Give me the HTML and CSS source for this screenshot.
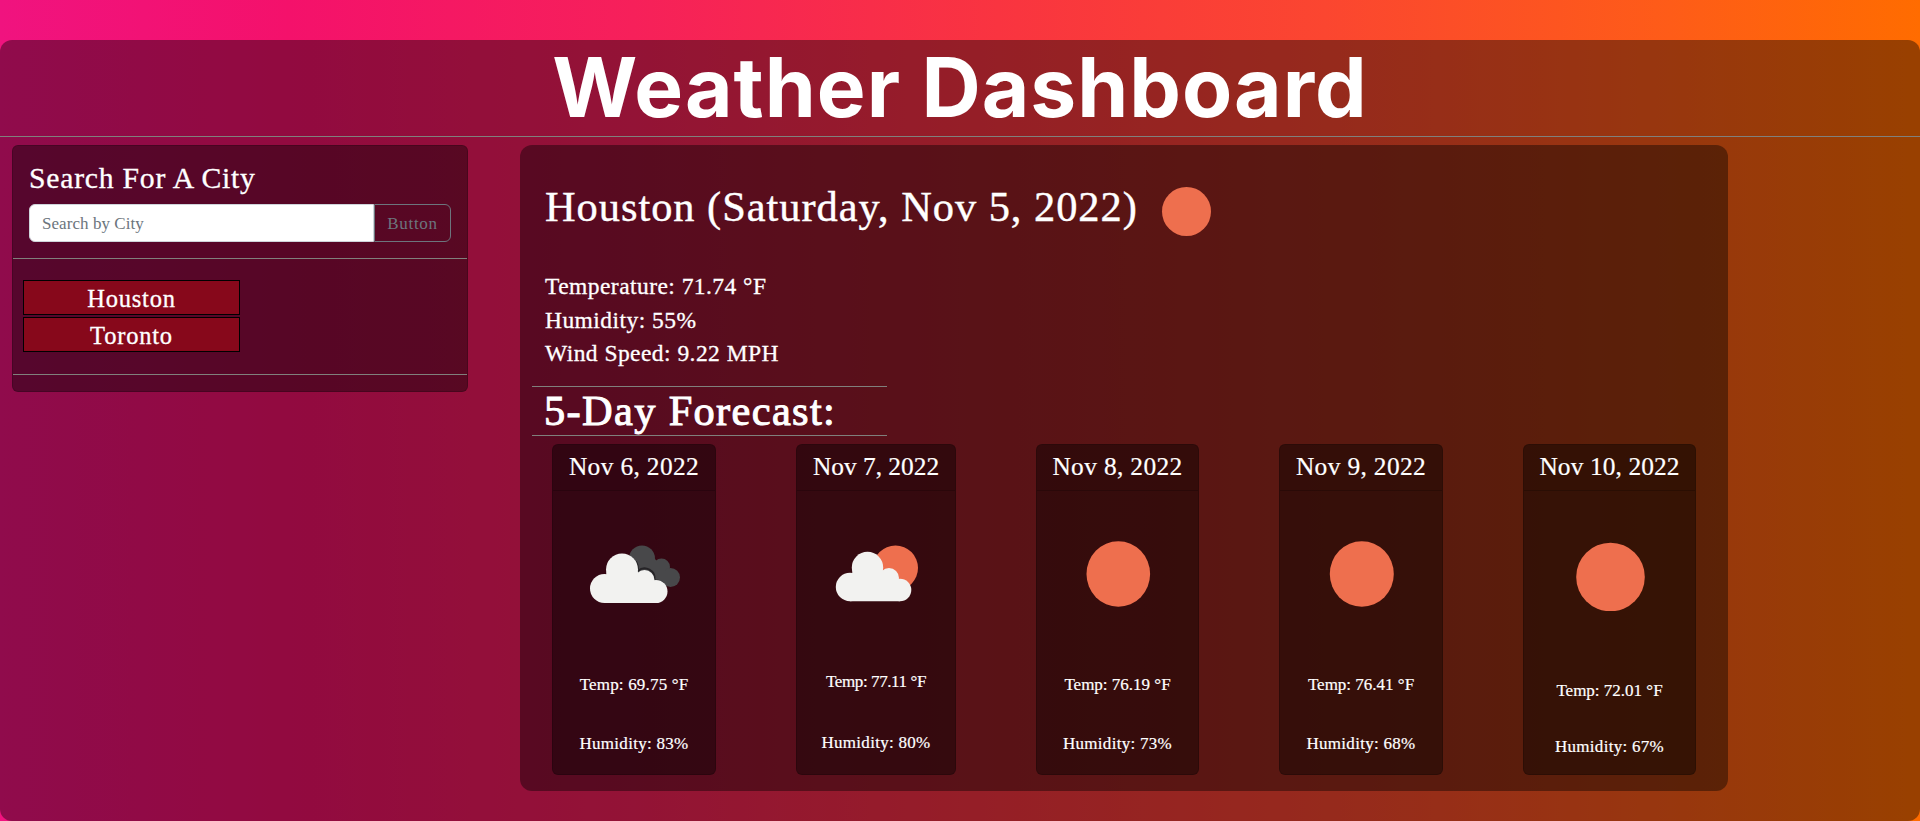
FILE: index.html
```html
<!DOCTYPE html>
<html lang="en">
<head>
<meta charset="utf-8">
<title>Weather Dashboard</title>
<link rel="stylesheet" href="styles.css">
</head>
<body>
<div class="dashboard">
  <header class="banner"><h1 class="banner-title">Weather Dashboard</h1></header>
  <main class="columns">
    <aside class="search-card">
      <div class="search-body">
        <h2 class="search-title">Search For A City</h2>
        <form class="search-form">
          <input class="search-input" type="text" placeholder="Search by City">
          <button class="search-button" type="button">Button</button>
        </form>
      </div>
      <div class="history">
        <button class="city" type="button">Houston</button>
        <button class="city" type="button">Toronto</button>
      </div>
    </aside>
    <section class="weather">
      <div class="current">
        <h2 class="current-title">Houston (Saturday, Nov 5, 2022)</h2>
        <svg class="current-icon" viewBox="0 0 50 50"><circle cx="25.500" cy="24.500" r="24.500"/></svg>
      </div>
      <div class="stats">
        <p>Temperature: 71.74 °F</p>
        <p>Humidity: 55%</p>
        <p>Wind Speed: 9.22 MPH</p>
      </div>
      <h2 class="forecast-title">5-Day Forecast:</h2>
      <div class="forecast">
        <article class="day day-1">
          <h3 class="day-date">Nov 6, 2022</h3>
          <svg class="day-icon" viewBox="0 0 162 120">
            <g class="dark-cloud"><circle cx="89" cy="67.500" r="13"/><circle cx="108.500" cy="76" r="8.500"/><circle cx="117.500" cy="86.500" r="9.500"/><path d="M80 68h22l11 12v16H80z"/></g>
            <g class="cloud-edge"><path d="M83 70.500A16 16 0 0 1 85 78.500"/><path d="M85 80a10 10 0 0 1 16.500 9M102 89.500a11.500 11.500 0 0 1 9 4"/></g>
            <g class="white-cloud"><circle cx="51.500" cy="97.500" r="14.500"/><circle cx="69" cy="78.500" r="16"/><circle cx="91.500" cy="89" r="10"/><circle cx="103" cy="100.500" r="11.500"/><path d="M51.500 112V94L54 80h30l8 10 9 10 2 0v12z"/></g>
          </svg>
          <p class="day-temp">Temp: 69.75 °F</p>
          <p class="day-humidity">Humidity: 83%</p>
        </article>
        <article class="day day-2">
          <h3 class="day-date">Nov 7, 2022</h3>
          <svg class="day-icon" viewBox="0 0 158 120">
            <circle class="sun" cx="98.500" cy="77" r="22.500"/>
            <g class="white-cloud"><circle cx="53" cy="96" r="14.200"/><circle cx="70.500" cy="76.500" r="15.700"/><circle cx="92" cy="87" r="10"/><circle cx="103" cy="99" r="11.300"/><path d="M53 110.200V92l3-13h29l8 9 9 10 1 0v12.200z"/></g>
          </svg>
          <p class="day-temp">Temp: 77.11 °F</p>
          <p class="day-humidity">Humidity: 80%</p>
        </article>
        <article class="day day-3">
          <h3 class="day-date">Nov 8, 2022</h3>
          <svg class="day-icon" viewBox="0 0 161 120"><ellipse class="sun" cx="81.300" cy="83" rx="31.800" ry="32.800"/></svg>
          <p class="day-temp">Temp: 76.19 °F</p>
          <p class="day-humidity">Humidity: 73%</p>
        </article>
        <article class="day day-4">
          <h3 class="day-date">Nov 9, 2022</h3>
          <svg class="day-icon" viewBox="0 0 162 120"><ellipse class="sun" cx="81.800" cy="83" rx="32" ry="32.800"/></svg>
          <p class="day-temp">Temp: 76.41 °F</p>
          <p class="day-humidity">Humidity: 68%</p>
        </article>
        <article class="day day-5">
          <h3 class="day-date">Nov 10, 2022</h3>
          <svg class="day-icon" viewBox="0 0 171 120"><circle class="sun" cx="86.500" cy="86" r="34.300"/></svg>
          <p class="day-temp">Temp: 72.01 °F</p>
          <p class="day-humidity">Humidity: 67%</p>
        </article>
      </div>
    </section>
  </main>
</div>
</body>
</html>
```
FILE: styles.css
```css
* { box-sizing: border-box; }
body {
  margin: 0;
  padding-top: 40px;
  height: 821px;
  overflow: hidden;
  color: #fff;
  font-family: "Liberation Serif", serif;
  background: linear-gradient(to right, #f0137f 0%, #f4116b 15%, #f6205a 33%, #f93440 52%, #fb4630 69%, #fe5c18 87%, #ff6c00 100%);
}
h1, h2, h3, p { margin: 0; font-weight: 400; }
.dashboard { height: 781px; border-radius: 12px; background: rgba(0, 0, 0, .4); }
.banner { height: 97px; border-bottom: 1px solid #80807c; text-align: center; }
.banner-title { font: 700 82px/95px Inter, sans-serif; letter-spacing: 1px; white-space: nowrap; }
.columns { display: flex; align-items: flex-start; gap: 52px; padding: 8px 0 0 12px; }
.search-card { width: 456px; height: 247px; border: 1px solid rgba(0, 0, 0, .175); border-radius: 6px; background: rgba(0, 0, 0, .4); }
.search-body { height: 113px; padding: 15px 16px 0; border-bottom: 1px solid #80807c; }
.search-title { height: 43px; font-size: 29.700px; line-height: 34px; letter-spacing: .77px; -webkit-text-stroke: .3px #fff; }
.search-form { display: flex; height: 38px; }
.search-input { width: 345px; padding: 1px 12px 0; border: 1px solid #ced4da; border-radius: 6px 0 0 6px; background: #fff; font: 17px "Liberation Serif", serif; letter-spacing: .06px; }
.search-input::placeholder { color: #6c757d; opacity: 1; }
.search-button { width: 77px; padding: 1px 0 0; border: 1px solid #6c757d; border-radius: 0 6px 6px 0; background: none; color: #6c757d; font: 17px "Liberation Serif", serif; letter-spacing: .7px; }
.history { display: flex; flex-direction: column; gap: 2px; height: 116px; padding: 21px 0 0 10px; border-bottom: 1px solid #80807c; }
.city { width: 217px; height: 35px; padding: 2px 0 0; border: 1px solid #000; background: #87081b; color: #fff; font: 24.500px "Liberation Serif", serif; letter-spacing: .8px; -webkit-text-stroke: .3px #fff; }
.weather { width: 1208px; height: 646px; border-radius: 12px; background: rgba(0, 0, 0, .4); }
.current { display: flex; height: 125px; padding: 36px 0 0 25px; }
.current-title { width: 616px; font-size: 42.400px; line-height: 52px; letter-spacing: .98px; white-space: nowrap; -webkit-text-stroke: .4px #fff; }
.current-icon { width: 50px; height: 50px; margin-top: 6px; fill: #ee6f4e; }
.stats { height: 116px; padding-left: 25px; font-size: 23.500px; line-height: 33.500px; letter-spacing: .45px; -webkit-text-stroke: .3px #fff; }
.forecast-title { width: 355px; height: 50px; margin-left: 12px; padding-left: 12px; border: solid #80807c; border-width: 1px 0; font-size: 42.400px; line-height: 48px; letter-spacing: 1.35px; white-space: nowrap; -webkit-text-stroke: 1px #fff; }
.forecast { display: flex; justify-content: space-between; padding: 8px 32px 0; }
.day { height: 331px; border: 1px solid rgba(0, 0, 0, .175); border-radius: 6px; background: rgba(0, 0, 0, .4); text-align: center; font-size: 17px; -webkit-text-stroke: .2px #fff; }
.day-1, .day-4 { width: 164px; }
.day-2 { width: 160px; }
.day-3 { width: 163px; }
.day-5 { width: 173px; }
.day-date { height: 46px; border-bottom: 1px solid rgba(0, 0, 0, .175); background: rgba(0, 0, 0, .03); font-size: 25.400px; line-height: 42px; letter-spacing: .35px; }
.day-icon { display: block; width: 100%; height: 120px; }
.day-temp, .day-humidity { line-height: 20px; }
.day-temp { padding-top: 64px; letter-spacing: 0; }
.day-humidity { padding-top: 39px; letter-spacing: .28px; }
.day-1 .day-temp { letter-spacing: .18px; }
.day-2 .day-date { letter-spacing: 0; }
.day-2 .day-temp { padding-top: 61px; letter-spacing: -.4px; }
.day-2 .day-humidity { padding-top: 41px; }
.day-5 .day-date { letter-spacing: .1px; }
.day-5 .day-temp { padding-top: 70px; }
.day-5 .day-humidity { padding-top: 36px; }
.sun { fill: #ee6f4e; }
.dark-cloud { fill: #48484a; }
.white-cloud { fill: #f2f2f0; }
.cloud-edge { fill: none; stroke: #262427; stroke-width: 2px; }
```
